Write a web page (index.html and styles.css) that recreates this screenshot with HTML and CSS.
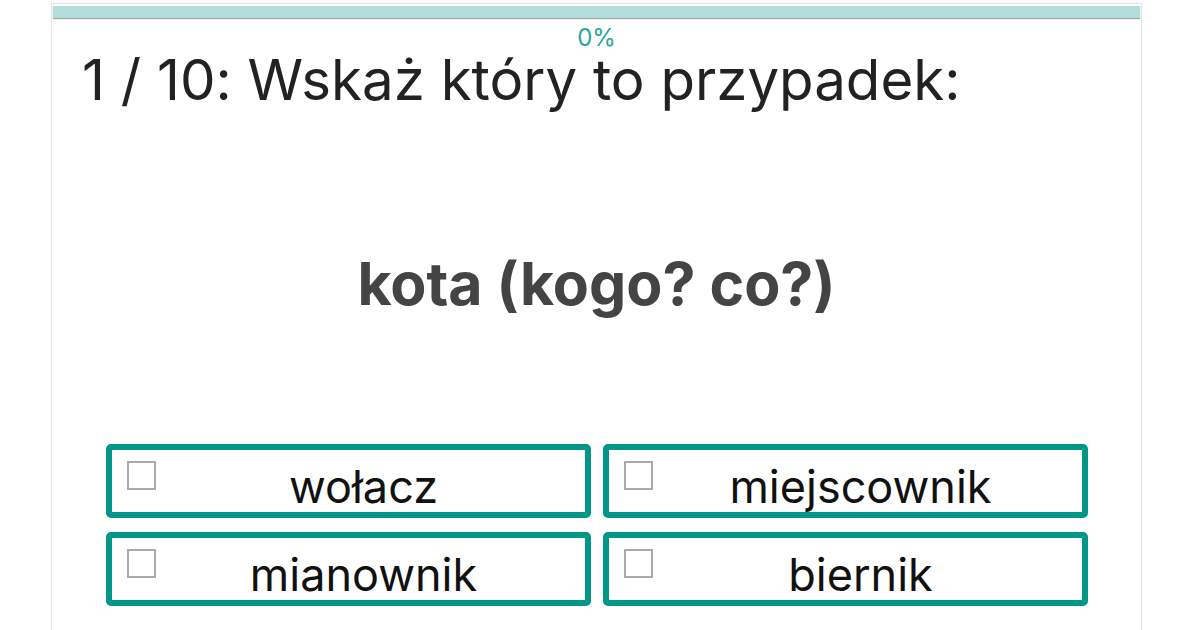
FILE: index.html
```html
<!DOCTYPE html>
<html lang="pl">
<head>
<meta charset="utf-8">
<title>Quiz</title>
<link rel="stylesheet" href="styles.css">
</head>
<body>
<div class="page">
  <main class="card">
    <div class="progress"><div class="progress-fill"></div></div>
    <div class="progress-label">0%</div>
    <h1 class="question">1 / 10: Wskaż który to przypadek:</h1>
    <div class="word">kota (kogo? co?)</div>
    <div class="answers">
      <button class="answer"><span class="check"></span><span class="answer-text">wołacz</span></button>
      <button class="answer"><span class="check"></span><span class="answer-text">miejscownik</span></button>
      <button class="answer"><span class="check"></span><span class="answer-text">mianownik</span></button>
      <button class="answer"><span class="check"></span><span class="answer-text">biernik</span></button>
    </div>
  </main>
</div>
</body>
</html>
```

FILE: styles.css
```css
html, body {
  margin: 0;
  padding: 0;
  background: #ffffff;
  font-family: Inter, Roboto, "Liberation Sans", sans-serif;
  font-feature-settings: "calt" 0;
}

.page {
  padding: 3px 0 0 51px;
}

.card {
  width: 1091px;
  min-height: 700px;
  border: 1px solid #e6e6e6;
  border-bottom: none;
  box-shadow: 0 0 2px rgba(0, 0, 0, 0.06);
  padding: 2px 1px 0;
  box-sizing: border-box;
  background: #fff;
}

.progress {
  height: 12px;
  background: #b2dfdb;
  box-shadow: 0 1px 1px rgba(0, 0, 0, 0.35);
}

.progress-fill {
  width: 0%;
  height: 100%;
  background: #26a69a;
}

.progress-label {
  margin-top: 11px;
  text-align: center;
  font-size: 24px;
  line-height: 18px;
  color: #26a69a;
}

.question {
  margin: 2px 0 0 0;
  padding-left: 29px;
  font-weight: 400;
  font-size: 56.4px;
  line-height: 62px;
  color: #222;
}

.word {
  margin-top: 137px;
  text-align: center;
  font-weight: 700;
  font-size: 59px;
  line-height: 72px;
  color: #444;
}

.answers {
  margin: 124px 52px 0 53px;
  display: grid;
  grid-template-columns: 1fr 1fr;
  column-gap: 12px;
  row-gap: 14px;
}

.answer {
  display: flex;
  align-items: flex-start;
  height: 74px;
  margin: 0;
  padding: 0;
  border: 6px solid #009688;
  border-radius: 5px;
  background: #fff;
  box-sizing: border-box;
  font-family: Inter, Roboto, "Liberation Sans", sans-serif;
  font-feature-settings: "calt" 0;
  cursor: pointer;
}

.check {
  flex: none;
  width: 29px;
  height: 29px;
  margin: 11px -14px 0 15px;
  border: 2px solid #aaaaaa;
  box-sizing: border-box;
  background: #fff;
}

.answer-text {
  flex: 1;
  text-align: center;
  padding-top: 10px;
  font-size: 45px;
  line-height: 54px;
  color: #111;
}
```
